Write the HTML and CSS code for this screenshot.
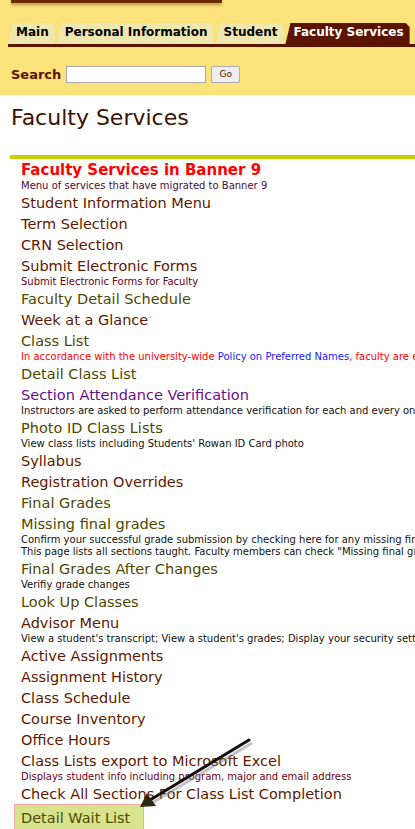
FILE: index.html
```html
<!DOCTYPE html>
<html lang="en">
<head>
    <meta charset="UTF-8">
    <meta name="viewport" content="width=device-width, initial-scale=1.0">
    <title>Faculty Services</title>
    <link rel="stylesheet" href="styles.css">
</head>
<body>
    <div class="header">
        <div class="logo-strip"></div>
        <div class="tabs">
            <a class="tab" href="#">Main</a>
            <a class="tab" href="#">Personal Information</a>
            <a class="tab" href="#">Student</a>
            <a class="tab active" href="#">Faculty Services</a>
        </div>
        <form class="search">
            <label for="q">Search</label>
            <input type="text" id="q">
            <button type="button">Go</button>
        </form>
    </div>

    <h1 class="page-title">Faculty Services</h1>
    <div class="rule"></div>

    <ul class="menu">
        <li><a class="banner" href="#">Faculty Services in Banner 9</a><div class="desc purple">Menu of services that have migrated to Banner 9</div></li>
        <li><a href="#">Student Information Menu</a></li>
        <li><a href="#">Term Selection</a></li>
        <li><a href="#">CRN Selection</a></li>
        <li><a href="#">Submit Electronic Forms</a><div class="desc maroon">Submit Electronic Forms for Faculty</div></li>
        <li><a class="olive" href="#">Faculty Detail Schedule</a></li>
        <li><a href="#">Week at a Glance</a></li>
        <li><a class="olive" href="#">Class List</a><div class="desc red">In accordance with the university-wide <a href="#">Policy on Preferred Names</a>, faculty are expected to use students' preferred names</div></li>
        <li><a class="olive" href="#">Detail Class List</a></li>
        <li><a class="visited" href="#">Section Attendance Verification</a><div class="desc">Instructors are asked to perform attendance verification for each and every one of their sections</div></li>
        <li><a class="olive" href="#">Photo ID Class Lists</a><div class="desc">View class lists including Students' Rowan ID Card photo</div></li>
        <li><a href="#">Syllabus</a></li>
        <li><a href="#">Registration Overrides</a></li>
        <li><a class="olive" href="#">Final Grades</a></li>
        <li><a class="olive" href="#">Missing final grades</a><div class="desc">Confirm your successful grade submission by checking here for any missing final grades</div><div class="desc">This page lists all sections taught. Faculty members can check "Missing final grades" at any time</div></li>
        <li><a class="olive" href="#">Final Grades After Changes</a><div class="desc">Verifiy grade changes</div></li>
        <li><a class="olive" href="#">Look Up Classes</a></li>
        <li><a href="#">Advisor Menu</a><div class="desc">View a student's transcript; View a student's grades; Display your security settings</div></li>
        <li><a href="#">Active Assignments</a></li>
        <li><a href="#">Assignment History</a></li>
        <li><a href="#">Class Schedule</a></li>
        <li><a href="#">Course Inventory</a></li>
        <li><a href="#">Office Hours</a></li>
        <li><a href="#">Class Lists export to Microsoft Excel</a><div class="desc maroon">Displays student info including program, major and email address</div></li>
        <li><a href="#">Check All Sections For Class List Completion</a></li>
        <li class="highlight"><a class="olive" href="#">Detail Wait List</a></li>
    </ul>

    <!-- flecha de anotacion -->
    <svg class="arrow" width="415" height="829" viewBox="0 0 415 829">
        <line x1="252" y1="743" x2="152" y2="803" stroke="#888" stroke-width="3" opacity="0.5"/>
        <line x1="249" y1="740" x2="150" y2="800" stroke="#111" stroke-width="3" stroke-linecap="round"/>
        <polygon points="140,807 147,793 156,806" fill="#2a2a10"/>
    </svg>
</body>
</html>
```

FILE: styles.css
```css
body {
    margin: 0;
    padding: 0;
    font-family: "DejaVu Sans", Verdana, sans-serif;
    background: #ffffff;
    color: #000;
    position: relative;
}

/* Cabecera amarilla */
.header {
    background-color: #fbe27b;
    height: 95px;
    box-sizing: border-box;
}

.logo-strip {
    margin-left: 11px;
    width: 211px;
    height: 3px;
    background: #6b2a00;
    box-shadow: 0 2px 3px rgba(90, 60, 0, 0.45);
}

.tabs {
    display: flex;
    margin: 20px 0 0 8px;
    border-bottom: 3px solid #5a1400;
    gap: 2px;
    white-space: nowrap;
    overflow: hidden;
}

.tab {
    display: block;
    flex-shrink: 0;
    height: 21px;
    line-height: 19px;
    padding: 0 6px 0 8px;
    background: #eee8b0;
    color: #000;
    font-weight: bold;
    font-size: 12px;
    text-decoration: none;
    clip-path: polygon(0 100%, 5px 0, calc(100% - 4px) 0, 100% 4px, 100% 100%);
}

.tab.active {
    background: #5a1400;
    color: #ffffff;
}

.search {
    display: flex;
    align-items: center;
    margin: 18px 0 0 11px;
    height: 18px;
}

.search label {
    font-weight: bold;
    font-size: 13px;
    color: #5a1400;
    margin-right: 5px;
}

.search input {
    width: 140px;
    height: 17px;
    box-sizing: border-box;
    border: 1px solid #aaa;
    margin: 0;
    padding: 0 2px;
}

.search button {
    margin-left: 5px;
    width: 29px;
    height: 17px;
    font-size: 9px;
    font-family: "DejaVu Sans", Verdana, sans-serif;
    color: #5a1400;
    background: #eeeeee;
    border: 1px solid #aaa;
    border-radius: 2px;
    padding: 0;
}

/* Titulo */
.page-title {
    margin: 9px 0 0 11px;
    font-size: 22px;
    font-weight: normal;
    color: #3a1200;
    line-height: 28px;
}

.rule {
    margin: 23px 0 0 10px;
    height: 4px;
    background: #cccc00;
}

/* Lista de opciones */
.menu {
    list-style: none;
    margin: 0;
    padding: 0 0 0 21px;
    white-space: nowrap;
    overflow: hidden;
}

.menu li {
    padding-top: 2px;
}

.menu li > a {
    display: block;
    font-size: 14.5px;
    line-height: 19px;
    color: #5c1800;
    text-decoration: none;
}

.menu li > a.olive {
    color: #4c4800;
}

.menu li > a.visited {
    color: #6a0d8a;
}

.menu li > a.banner {
    color: #ff0000;
    font-weight: bold;
    font-size: 15px;
}

.desc {
    font-size: 10px;
    line-height: 12px;
    color: #111;
}

.desc.purple {
    color: #4a0a3a;
}

.desc.maroon {
    color: #6a0020;
}

.desc.red {
    color: #ff0000;
}

.desc.red a {
    color: #2020ff;
    text-decoration: none;
}

.menu li.highlight {
    margin-left: -7px;
    padding: 4px 0 0 6px;
    width: 122px;
    height: 25px;
    background: #d8e38e;
    border: 1px solid #f0a8a0;
}

.arrow {
    position: absolute;
    left: 0;
    top: 0;
    pointer-events: none;
}
```
